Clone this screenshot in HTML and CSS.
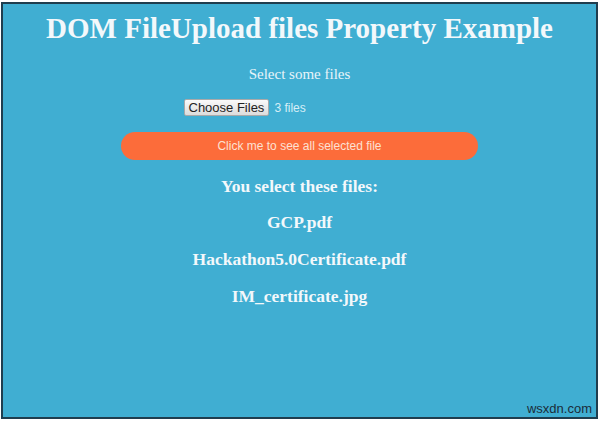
FILE: index.html
```html
<!DOCTYPE html>
<html lang="en">
<head>
<meta charset="utf-8">
<title>DOM FileUpload files Property Example</title>
<link rel="stylesheet" href="styles.css">
</head>
<body>
<div class="frame">
  <h1 class="title">DOM FileUpload files Property Example</h1>
  <p class="prompt">Select some files</p>
  <div class="picker">
    <span class="choose">Choose Files</span>
    <span class="count">3 files</span>
  </div>
  <div class="action">Click me to see all selected file</div>
  <div class="results">
    <h2 class="heading">You select these files:</h2>
    <p class="file">GCP.pdf</p>
    <p class="file">Hackathon5.0Certificate.pdf</p>
    <p class="file">IM_certificate.jpg</p>
  </div>
  <span class="watermark">wsxdn.com</span>
</div>
</body>
</html>
```

FILE: styles.css
```css
html, body {
  margin: 0;
  padding: 0;
  background: #ffffff;
}

.frame {
  position: relative;
  margin: 2px 2px 2px 1px;
  height: 413px;
  border: 2px solid #1f3d4e;
  background: #40aed2;
  overflow: hidden;
  font-family: "Liberation Serif", "Times New Roman", serif;
  color: #f3f8fb;
  text-align: center;
}

.title {
  margin: 7px 0 0;
  font-size: 29px;
  line-height: 34px;
  font-weight: bold;
}

.prompt {
  margin: 20px 0 0;
  font-size: 15px;
  line-height: 18px;
  color: #e8f4f9;
}

.picker {
  display: flex;
  align-items: center;
  gap: 5px;
  width: 232px;
  margin: 16px auto 0;
  font-family: "Liberation Sans", Arial, sans-serif;
}

.choose {
  box-sizing: border-box;
  height: 17px;
  padding: 0 4px;
  border: 1px solid #a9a9a9;
  border-radius: 2px;
  background: linear-gradient(#fafafa, #dcdcdc);
  color: #222;
  font-size: 13px;
  line-height: 15px;
}

.count {
  font-size: 12px;
  color: #d7eef7;
}

.action {
  width: 357px;
  height: 28px;
  margin: 16px auto 0;
  border-radius: 14px;
  background: #fc6c3a;
  color: #fde1d3;
  font-family: "Liberation Sans", Arial, sans-serif;
  font-size: 12px;
  line-height: 28px;
}

.results {
  display: flex;
  flex-direction: column;
  gap: 14.7px;
  margin-top: 14.6px;
}

.heading,
.file {
  margin: 0;
  font-size: 17.5px;
  line-height: 22px;
  font-weight: bold;
}

.watermark {
  position: absolute;
  right: 4px;
  bottom: 1px;
  font-family: "Liberation Sans", Arial, sans-serif;
  font-size: 13px;
  color: #1b2c38;
}
```
